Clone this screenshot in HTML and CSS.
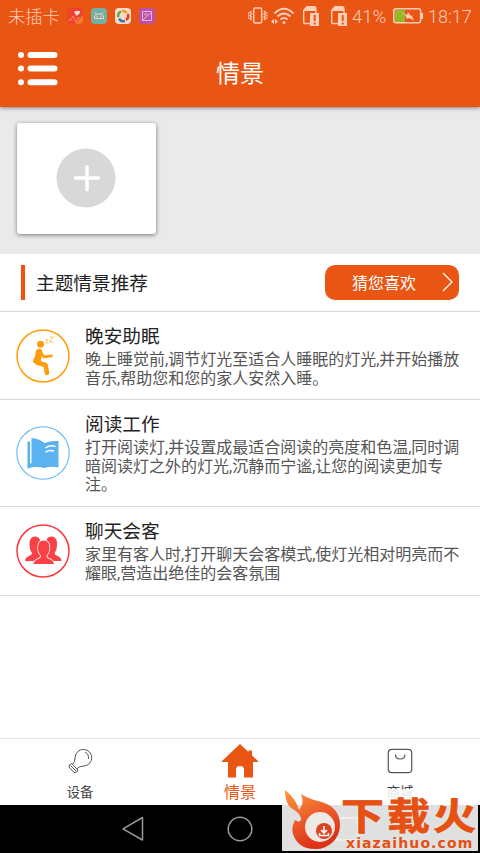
FILE: index.html
```html
<!DOCTYPE html>
<html lang="zh-CN">
<head>
<meta charset="utf-8">
<title>情景</title>
<link rel="stylesheet" href="styles.css">
</head>
<body>
<div class="app">
  <header class="header">
    <div class="status">
      <span class="carrier">未插卡</span>
      <div class="notices">
        <svg width="16" height="16" viewBox="0 0 16 16"><rect width="16" height="16" rx="4" fill="#f0412c"/><path d="M8 16L16 7v5q0 4-4 4z" fill="#f47b26"/><path d="M9.500 8L7.500 5Q7 2.500 9 3Q10 2.500 10.500 3.300Q12.500 2 13 4Q13 6 9.500 8z" fill="#ffdfd5"/><path d="M1 12h3l2-4 3 6 2-4h2" fill="none" stroke="#ff9a70" stroke-width=".8"/></svg>
        <svg width="16" height="16" viewBox="0 0 16 16"><rect width="16" height="16" rx="4" fill="#72afa4"/><path d="M3.500 10.500V9q0-3 4.500-3t4.500 3v1.500zM5 6L4 4.500M11 6l1-1.500" fill="none" stroke="#ffd3bd"/><circle cx="6" cy="8.500" r=".7" fill="#ffd3bd"/><circle cx="10" cy="8.500" r=".7" fill="#ffd3bd"/></svg>
        <svg width="16" height="16" viewBox="0 0 16 16"><rect width="16" height="16" rx="4" fill="#fbdacb"/><g fill="none" stroke-width="2.500"><path d="M3.300 9A5 5 0 0 1 6 3.500" stroke="#55a84b"/><path d="M7 3A5 5 0 0 1 12 5" stroke="#eda01d"/><path d="M12.700 6A5 5 0 0 1 11 12" stroke="#e73b20"/><path d="M10 13A5 5 0 0 1 4 10.500" stroke="#347bac"/></g></svg>
        <svg width="16" height="16" viewBox="0 0 16 16"><rect width="16" height="16" rx="4" fill="#b852ae"/><path d="M3.500 3.500h9v9h-9zM4 12l4-4 4-3M5 6l2 1 1-2" fill="none" stroke="#efb3cb"/></svg>
      </div>
      <div class="signals">
        <svg width="20" height="18" viewBox="0 0 20 18" fill="none" stroke="#ffcdb8" stroke-width="1.500"><rect x="5.700" y="1" width="8" height="15" rx="1.500"/><path d="M3.500 4L2 5.500 3.500 7 2 8.500 3.500 10 2 11.500 3.500 13M16 4l1.500 1.500L16 7l1.500 1.500L16 10l1.500 1.500L16 13" stroke-width="1.300"/><path d="M.7 5v7M19 5v7" stroke-width=".8"/></svg>
        <svg width="26" height="18" viewBox="0 0 26 18" fill="none" stroke="#ffcdb8" stroke-width="1.900"><path d="M3.500 6.500Q13-3 22.500 6.500M6.500 9.500Q13 3.500 19.500 9.500M9.500 12.500Q13 9.500 16.500 12.500"/><circle cx="13" cy="15.500" r="1.500" fill="#ffcdb8" stroke="none"/><path d="M0 14.500l3-2.500v5zM7 14.500l-3-2.500v5z" fill="#ffcdb8" stroke="none"/></svg>
        <svg class="sim" width="18" height="22" viewBox="0 0 18 22"><path d="M1.700 18.500V5.500L5 1.700h7.500L14 3v5M1.700 18.500h7" fill="none" stroke="#ffcdb8" stroke-width="1.400"/><path d="M1.500 6V5L5 1h8l1 2v3H3zM8 8h9v13H8z" fill="#ffcdb8"/><path d="M11.700 10h2v6h-2zm0 7.500h2v2h-2z" fill="#e95513"/></svg>
        <svg class="sim sim-two" width="18" height="22" viewBox="0 0 18 22"><path d="M1.700 18.500V5.500L5 1.700h7.500L14 3v5M1.700 18.500h7" fill="none" stroke="#ffcdb8" stroke-width="1.400"/><path d="M1.500 6V5L5 1h8l1 2v3H3zM8 8h9v13H8z" fill="#ffcdb8"/><path d="M11.700 10h2v6h-2zm0 7.500h2v2h-2z" fill="#e95513"/></svg>
        <span class="percent">41%</span>
        <svg class="battery" width="30" height="16" viewBox="0 0 30 16"><path d="M2 2h10v12H2z" fill="#94b826"/><rect x=".8" y=".8" width="26.800" height="14" rx="2" fill="none" stroke="#ffcdb8" stroke-width="1.500"/><path d="M29 5v6" stroke="#ffcdb8" stroke-width="2"/><path d="M7 4l7 3 1-3 3 4 3-.5-2 1 2 4-5-2.500-2 1-2-4z" fill="#ffcdb8"/></svg>
        <span class="clock">18:17</span>
      </div>
    </div>
    <div class="titlebar">
      <svg class="menu" width="40" height="36" viewBox="0 0 40 36" fill="#fff"><circle cx="3" cy="4" r="3"/><circle cx="3" cy="17.500" r="3"/><circle cx="3" cy="31.300" r="3"/><rect x="9.500" y="1" width="30" height="6" rx="3"/><rect x="9.500" y="14.500" width="30" height="6" rx="3"/><rect x="9.500" y="28.300" width="30" height="6" rx="3"/></svg>
      <h1 class="title">情景</h1>
    </div>
  </header>

  <section class="scenes">
    <div class="add-card">
      <svg width="60" height="60" viewBox="0 0 60 60"><circle cx="30" cy="30" r="29.500" fill="#d8d8d8"/><path d="M19.500 30h23M31 18.800v23" stroke="#fff" stroke-width="3.500" stroke-linecap="round"/></svg>
    </div>
  </section>

  <section class="section-head">
    <span class="marker"></span>
    <h2 class="section-title">主题情景推荐</h2>
    <div class="guess"><span>猜您喜欢</span><svg width="12" height="20" viewBox="0 0 12 20"><path d="M1 1l9 9-9 9" fill="none" stroke="#fff" stroke-width="1.300"/></svg></div>
  </section>

  <main class="list">
    <article class="item">
      <svg class="item-icon" width="54" height="54" viewBox="0 0 54 54"><circle cx="27" cy="27" r="26" fill="#fff" stroke="#ff9c0b" stroke-width="1.500"/><g fill="none" stroke="#ff9c0b" stroke-linecap="round" stroke-linejoin="round"><circle cx="24.500" cy="15.300" r="3.500" fill="#ff9c0b" stroke="none"/><path d="M23 23L21.500 32" stroke-width="6.500"/><path d="M24 22.500L28 28l7.500-1.200" stroke-width="2.700"/><path d="M21 33.500l8.500 2.500L31 44" stroke-width="4.500"/><path d="M19 29l-1 4" stroke-width="2"/></g><path d="M29.500 10.500h2.700L29.500 14h3M33.500 8h4L33.500 13h4" fill="none" stroke="#ffb54a" stroke-width=".8"/></svg>
      <div class="item-body"><h3>晚安助眠</h3><p>晚上睡觉前,调节灯光至适合人睡眠的灯光,并开始播放音乐,帮助您和您的家人安然入睡。</p></div>
    </article>
    <article class="item item-tall">
      <svg class="item-icon" width="54" height="54" viewBox="0 0 54 54"><circle cx="27" cy="27" r="26.200" fill="#fff" stroke="#5fb8f0" stroke-width="1.100"/><g fill="#5ab3ef"><path d="M15.500 12Q23 12.500 28.500 17Q34 14.500 42.500 15v26.500Q35 40 28.500 42Q20 40 11.500 42.500V38q2-1 4-.5z"/><path d="M11.500 15.500h2.600V37l-2.600 3z"/></g><path d="M29.500 22Q34 18.500 39.500 20.500M29.500 26Q33.500 23.500 38 25" fill="none" stroke="#fff" stroke-width="1.500"/></svg>
      <div class="item-body"><h3>阅读工作</h3><p>打开阅读灯,并设置成最适合阅读的亮度和色温,同时调暗阅读灯之外的灯光,沉静而宁谧,让您的阅读更加专注。</p></div>
    </article>
    <article class="item item-last">
      <svg class="item-icon" width="54" height="54" viewBox="0 0 54 54"><circle cx="27" cy="27" r="26" fill="#fff" stroke="#fa393d" stroke-width="1.500"/><g fill="#fa4045"><path d="M19 12.500q5.500 0 5.500 7 0 4-2.500 6.500v3l4 2.500v5.500H9q0-3.500 4-5 3-1 3-3-2.500-3-2.500-9 0-7.500 5.500-7.500z"/><path d="M35.500 12.500q-5.500 0-5.500 7 0 4 2.500 6.500v3l-4 2.500v5.500h17q0-3.500-4-5-3-1-3-3 2.500-3 2.500-9 0-7.500-5.500-7.500z"/><path stroke="#fff" stroke-width="1.500" paint-order="stroke" d="M27.500 16.500q6 0 6 7 0 5-3 8 0 2.500 3 3.500 4 1.500 4.500 5H17.500q.5-3.500 4.500-5 3-1 3-3.500-3-3-3-8 0-7 5.500-7z"/></g></svg>
      <div class="item-body"><h3>聊天会客</h3><p>家里有客人时,打开聊天会客模式,使灯光相对明亮而不耀眼,营造出绝佳的会客氛围</p></div>
    </article>
  </main>

  <nav class="tabs">
    <div class="tab">
      <svg width="26" height="26" viewBox="0 0 26 26" fill="none" stroke="#555" stroke-width="1"><path d="M5.500 16.500Q8 14 8.200 9A8.300 8.300 0 1 1 17 18Q12 18 9.500 21"/><path d="M18 4Q22 6 21.500 11"/><path d="M4.500 15.500l6.500 6.500M3.500 17.500l5.500 5.500M4.500 15.500q-3 1-2.500 3.500l5 5.500q3.500.5 4-2.500"/></svg>
      <span>设备</span>
    </div>
    <div class="tab active">
      <svg width="38" height="36" viewBox="0 0 38 36"><path d="M19 1l8.500 8V7.500H31v5L37 18v1h-5v15.500h-9V26q-.5-3-4-3t-4 3v8.500H7V19H1v-1z" fill="#e95513"/></svg>
      <span>情景</span>
    </div>
    <div class="tab">
      <svg width="26" height="26" viewBox="0 0 26 26" fill="none" stroke="#555" stroke-width="1.200"><rect x="1.300" y="1.300" width="23.400" height="23.400" rx="3.500"/><path d="M8.500 6.500q0 4.500 4.700 4.500t4.700-4.500"/></svg>
      <span>商城</span>
    </div>
  </nav>

  <footer class="softkeys">
    <svg width="24" height="26" viewBox="0 0 24 26"><path d="M21.500 1.500v22.500L2 12.800z" fill="none" stroke="#999" stroke-width="1.500" stroke-linejoin="round"/></svg>
    <svg width="26" height="26" viewBox="0 0 26 26"><circle cx="13" cy="13" r="11.800" fill="none" stroke="#999" stroke-width="1.500"/></svg>
    <svg width="24" height="24" viewBox="0 0 24 24"><rect x="1" y="1" width="22" height="22" rx="1" fill="none" stroke="#999" stroke-width="1.500"/></svg>
  </footer>

  <aside class="watermark">
    <svg class="flame" width="58" height="62" viewBox="0 0 58 62"><defs><linearGradient id="fire" x1="0" y1="0" x2=".4" y2="1"><stop offset="0" stop-color="#ff963b"/><stop offset=".5" stop-color="#ed622c"/><stop offset="1" stop-color="#dc3218"/></linearGradient></defs><path d="M2 1Q13 10 16 21Q22 14 18 5Q28 11 39 13Q57 19 57 36A24 24 0 0 1 32 60Q15 60 10 45Q8 39 12 31Q18 35 18 29Q16 23 8 19Q2 14 2 1z" fill="url(#fire)"/><circle cx="37" cy="38" r="15" fill="#efe9e6"/><circle cx="41" cy="42" r="8" fill="#dd4222"/><path d="M41 37v6m-3-2l3 3 3-3M36.500 44v2.500h9V44" fill="none" stroke="#fff" stroke-width="1.600"/></svg>
    <div class="wordmark"><div class="brand"><span>下</span><span>载</span><span>火</span></div><div class="domain">xiazaihuo.com</div></div>
  </aside>
</div>
</body>
</html>
```
FILE: styles.css
```css
* { box-sizing: border-box; }
body {
  margin: 0;
  font-family: Roboto, "Noto Sans CJK SC", sans-serif;
  background: #fff;
}
h1, h2, h3, p { margin: 0; font-weight: 400; }
svg { display: block; flex: none; }
.app {
  position: relative;
  width: 480px;
  height: 853px;
  display: flex;
  flex-direction: column;
  overflow: hidden;
}
.header {
  flex: none;
  height: 107px;
  background: #e95513;
  border-bottom: 1px solid #f05009;
  box-shadow: 0 1px 4px rgba(0, 0, 0, .45);
  z-index: 1;
}
.status {
  height: 32px;
  padding: 0 8px;
  display: flex;
  align-items: center;
  color: #ffcdb8;
  font-weight: 300;
}
.carrier { width: 59px; font-size: 17.3px; line-height: 32px; white-space: nowrap; padding-top: 2px; }
.notices { display: flex; gap: 8px; }
.signals { display: flex; align-items: center; margin-left: auto; }
.signals svg:nth-child(2) { margin-left: 3px; }
.signals .sim { margin-left: 5px; }
.signals .sim-two { margin-left: 10px; }
.percent, .clock { font-size: 18.5px; line-height: 32px; padding-top: 2px; white-space: nowrap; }
.percent { margin-left: 4px; width: 36px; }
.signals .battery { margin-left: 5px; }
.clock { margin-left: 5px; width: 44px; font-size: 18px; }
.titlebar {
  height: 74px;
  padding: 0 18px;
  display: grid;
  grid-template-columns: 1fr auto 1fr;
  align-items: center;
}
.title { font-size: 24px; line-height: 36px; color: #fff; padding-top: 10px; }
.scenes {
  flex: none;
  height: 147px;
  padding: 16px 17px;
  background: #eaeaea;
}
.add-card {
  width: 139px;
  height: 111px;
  padding: 0 2px 2px 0;
  display: flex;
  align-items: center;
  justify-content: center;
  background: #fff;
  border-radius: 3px;
  box-shadow: 0 1px 4px rgba(0, 0, 0, .5);
}
.section-head {
  flex: none;
  height: 58px;
  padding: 0 21px;
  display: flex;
  align-items: center;
  border-bottom: 1px solid #d8d8d8;
}
.marker { width: 4px; height: 35px; background: #f4500b; }
.section-title { margin-left: 11px; padding-top: 2px; font-size: 18.67px; line-height: 28px; color: #222; }
.guess {
  width: 134px;
  height: 35px;
  margin-left: auto;
  padding: 0 5px 2px 27px;
  display: flex;
  align-items: center;
  justify-content: space-between;
  border-radius: 10px;
  background: #e95513;
  color: #fff;
  font-size: 16px;
}
.item {
  height: 88px;
  padding-left: 16px;
  display: flex;
  align-items: center;
  border-bottom: 1px solid #d8d8d8;
}
.item-tall { height: 107px; }
.item-last { height: 89px; }
.item-body { width: 380px; margin-left: 15px; padding-top: 2px; }
.item h3 { font-size: 18.67px; line-height: 24px; color: #222; }
.item p { margin-top: 2px; font-size: 16px; line-height: 18.75px; color: #555; }
.tabs {
  height: 67px;
  margin-top: auto;
  display: grid;
  grid-template-columns: repeat(3, 1fr);
  border-top: 1px solid #e5e5e5;
}
.tab {
  display: flex;
  flex-direction: column;
  align-items: center;
  padding-top: 9px;
  font-size: 13.33px;
  line-height: 20px;
  color: #444;
}
.tab span { margin-top: 9px; }
.tab.active { padding-top: 4px; font-size: 16px; color: #e95513; }
.tab.active span { margin-top: 4px; }
.softkeys {
  flex: none;
  height: 48px;
  padding: 0 121px;
  display: flex;
  align-items: center;
  justify-content: space-between;
  background: #000;
}
.watermark {
  position: absolute;
  left: 282px;
  top: 789px;
  width: 196px;
  height: 62px;
  display: flex;
  background: rgba(255, 255, 255, .88);
}
.flame { margin-left: 1px; }
.wordmark { color: #e65012; font-weight: 700; }
.brand {
  display: flex;
  height: 48px;
  font-size: 37px;
  line-height: 57px;
}
.brand span { width: 46px; transform: scaleX(1.16); transform-origin: left; -webkit-text-stroke: .8px #e65012; }
.domain {
  padding-left: 5px;
  font-family: "DejaVu Sans", sans-serif;
  font-size: 14px;
  line-height: 13px;
  letter-spacing: 1.1px;
  white-space: nowrap;
}
```
